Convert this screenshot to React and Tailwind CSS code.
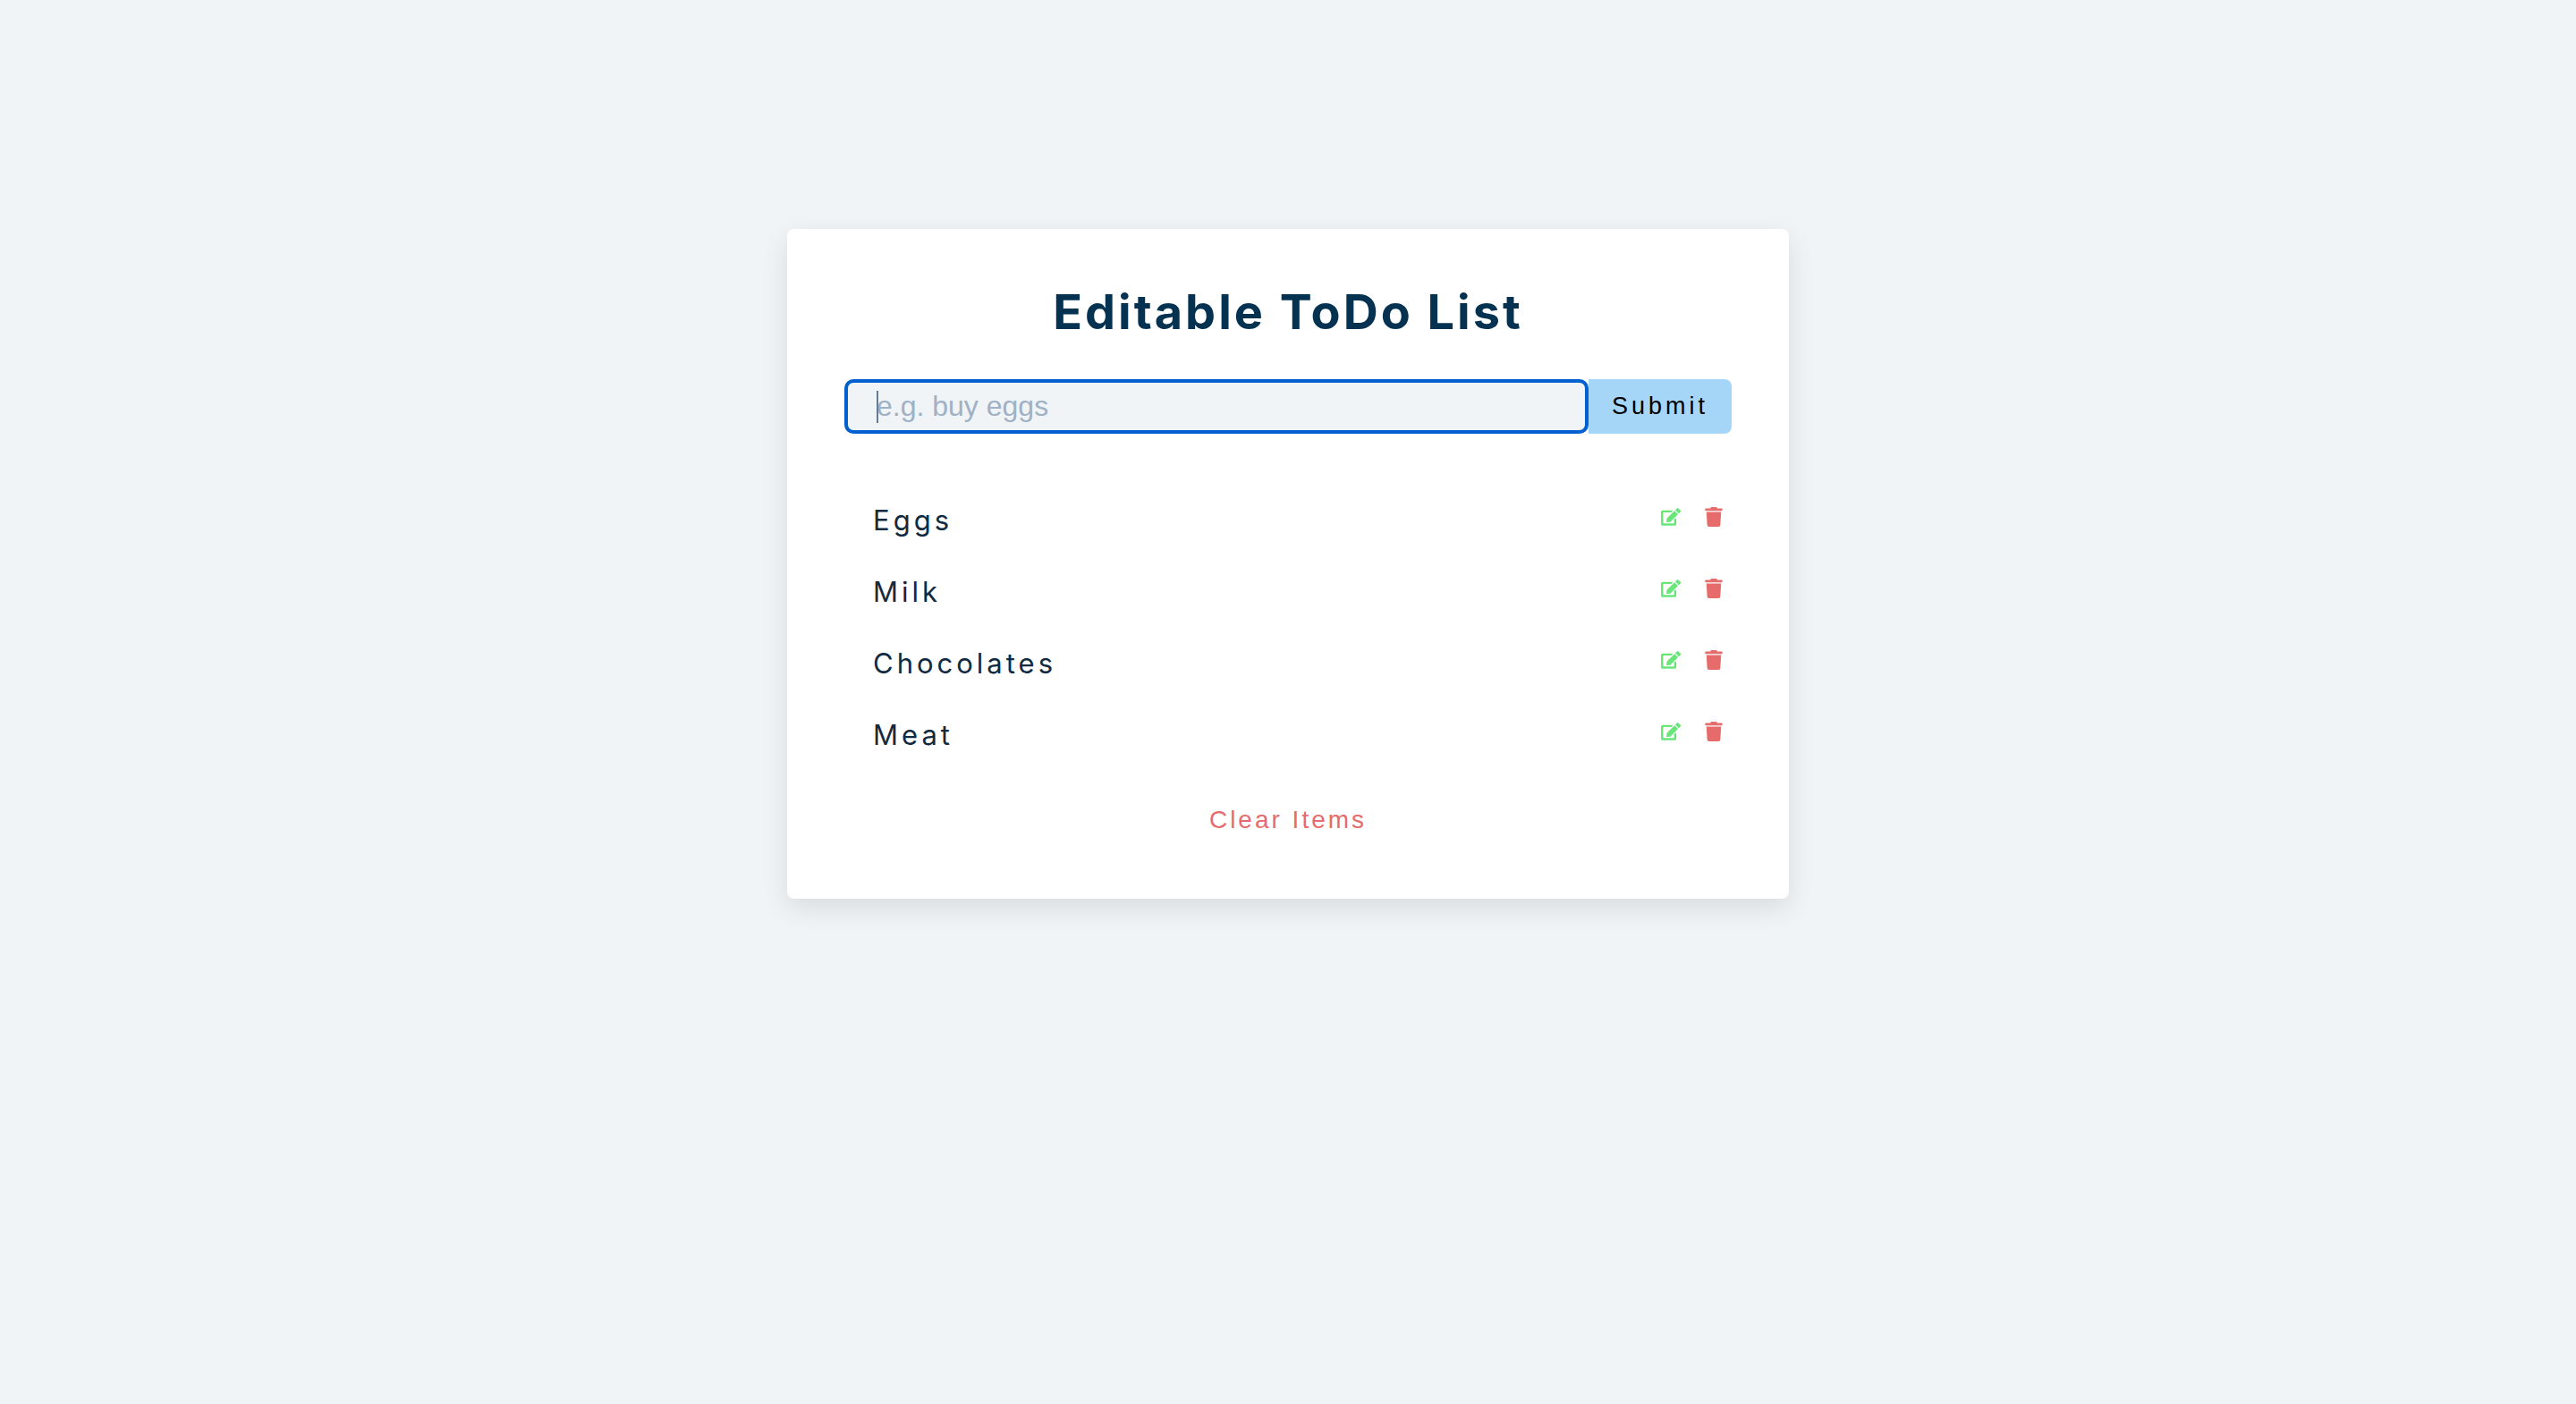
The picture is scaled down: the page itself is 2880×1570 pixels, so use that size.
import { useState } from "react";
import { FaEdit, FaTrash } from "react-icons/fa";

const initialItems = ["Eggs", "Milk", "Chocolates", "Meat"];

function TodoItem({ title, onEdit, onRemove }) {
  return (
    <li className="flex h-16 items-center justify-between pl-8 pr-[9px]">
      <p className="text-[31px] leading-10 tracking-[4px] text-[#102a42]">{title}</p>
      <div className="flex gap-[26px] pb-2 text-[22px]">
        <button type="button" aria-label={`Edit ${title}`} onClick={onEdit} className="cursor-pointer text-[#6ae679]">
          <FaEdit />
        </button>
        <button type="button" aria-label={`Delete ${title}`} onClick={onRemove} className="cursor-pointer text-[#e66b6b]">
          <FaTrash />
        </button>
      </div>
    </li>
  );
}

export default function App() {
  const [items, setItems] = useState(initialItems);
  const [value, setValue] = useState("");

  const submit = (e) => {
    e.preventDefault();
    if (value.trim()) {
      setItems([...items, value.trim()]);
      setValue("");
    }
  };

  return (
    <main className="min-h-screen bg-[#f0f4f7] px-8 pt-64 font-['Inter',sans-serif]">
      <section className="mx-auto max-w-[1120px] rounded-lg bg-white px-16 pt-[63px] pb-16 shadow-[0_10px_30px_rgba(0,0,0,0.1)]">
        <h1 className="mb-[45px] text-center text-[54px] leading-[60px] font-bold tracking-[3px] text-[#063251]">
          Editable ToDo List
        </h1>
        <form onSubmit={submit} className="flex h-[61px] font-['Liberation_Sans',Arial,sans-serif]">
          <div className="relative flex flex-1">
            <input
              type="text"
              aria-label="New item"
              placeholder="e.g. buy eggs"
              value={value}
              onChange={(e) => setValue(e.target.value)}
              className="w-full rounded-[10px] border-4 border-[#0060d0] bg-[#f0f4f7] px-8 pb-0.5 text-[32px] text-[#617d98] caret-transparent outline-none placeholder:text-[#9fb1c5]"
            />
            {value === "" && <span className="absolute top-[13px] left-9 h-9 w-0.5 bg-[#617d98]" />}
          </div>
          <button type="submit" className="w-40 cursor-pointer rounded-r-lg bg-[#a5d6f7] text-[27px] tracking-[4px] text-black">
            Submit
          </button>
        </form>
        <ul className="mt-[65px] flex flex-col gap-4">
          {items.map((title, i) => (
            <TodoItem
              key={title + i}
              title={title}
              onEdit={() => setValue(title)}
              onRemove={() => setItems(items.filter((_, n) => n !== i))}
            />
          ))}
        </ul>
        <button
          type="button"
          onClick={() => setItems([])}
          className="mx-auto mt-[39px] block cursor-pointer font-['Liberation_Sans',Arial,sans-serif] text-[28px] leading-12 tracking-[3px] text-[#e66b6b]"
        >
          Clear Items
        </button>
      </section>
    </main>
  );
}
